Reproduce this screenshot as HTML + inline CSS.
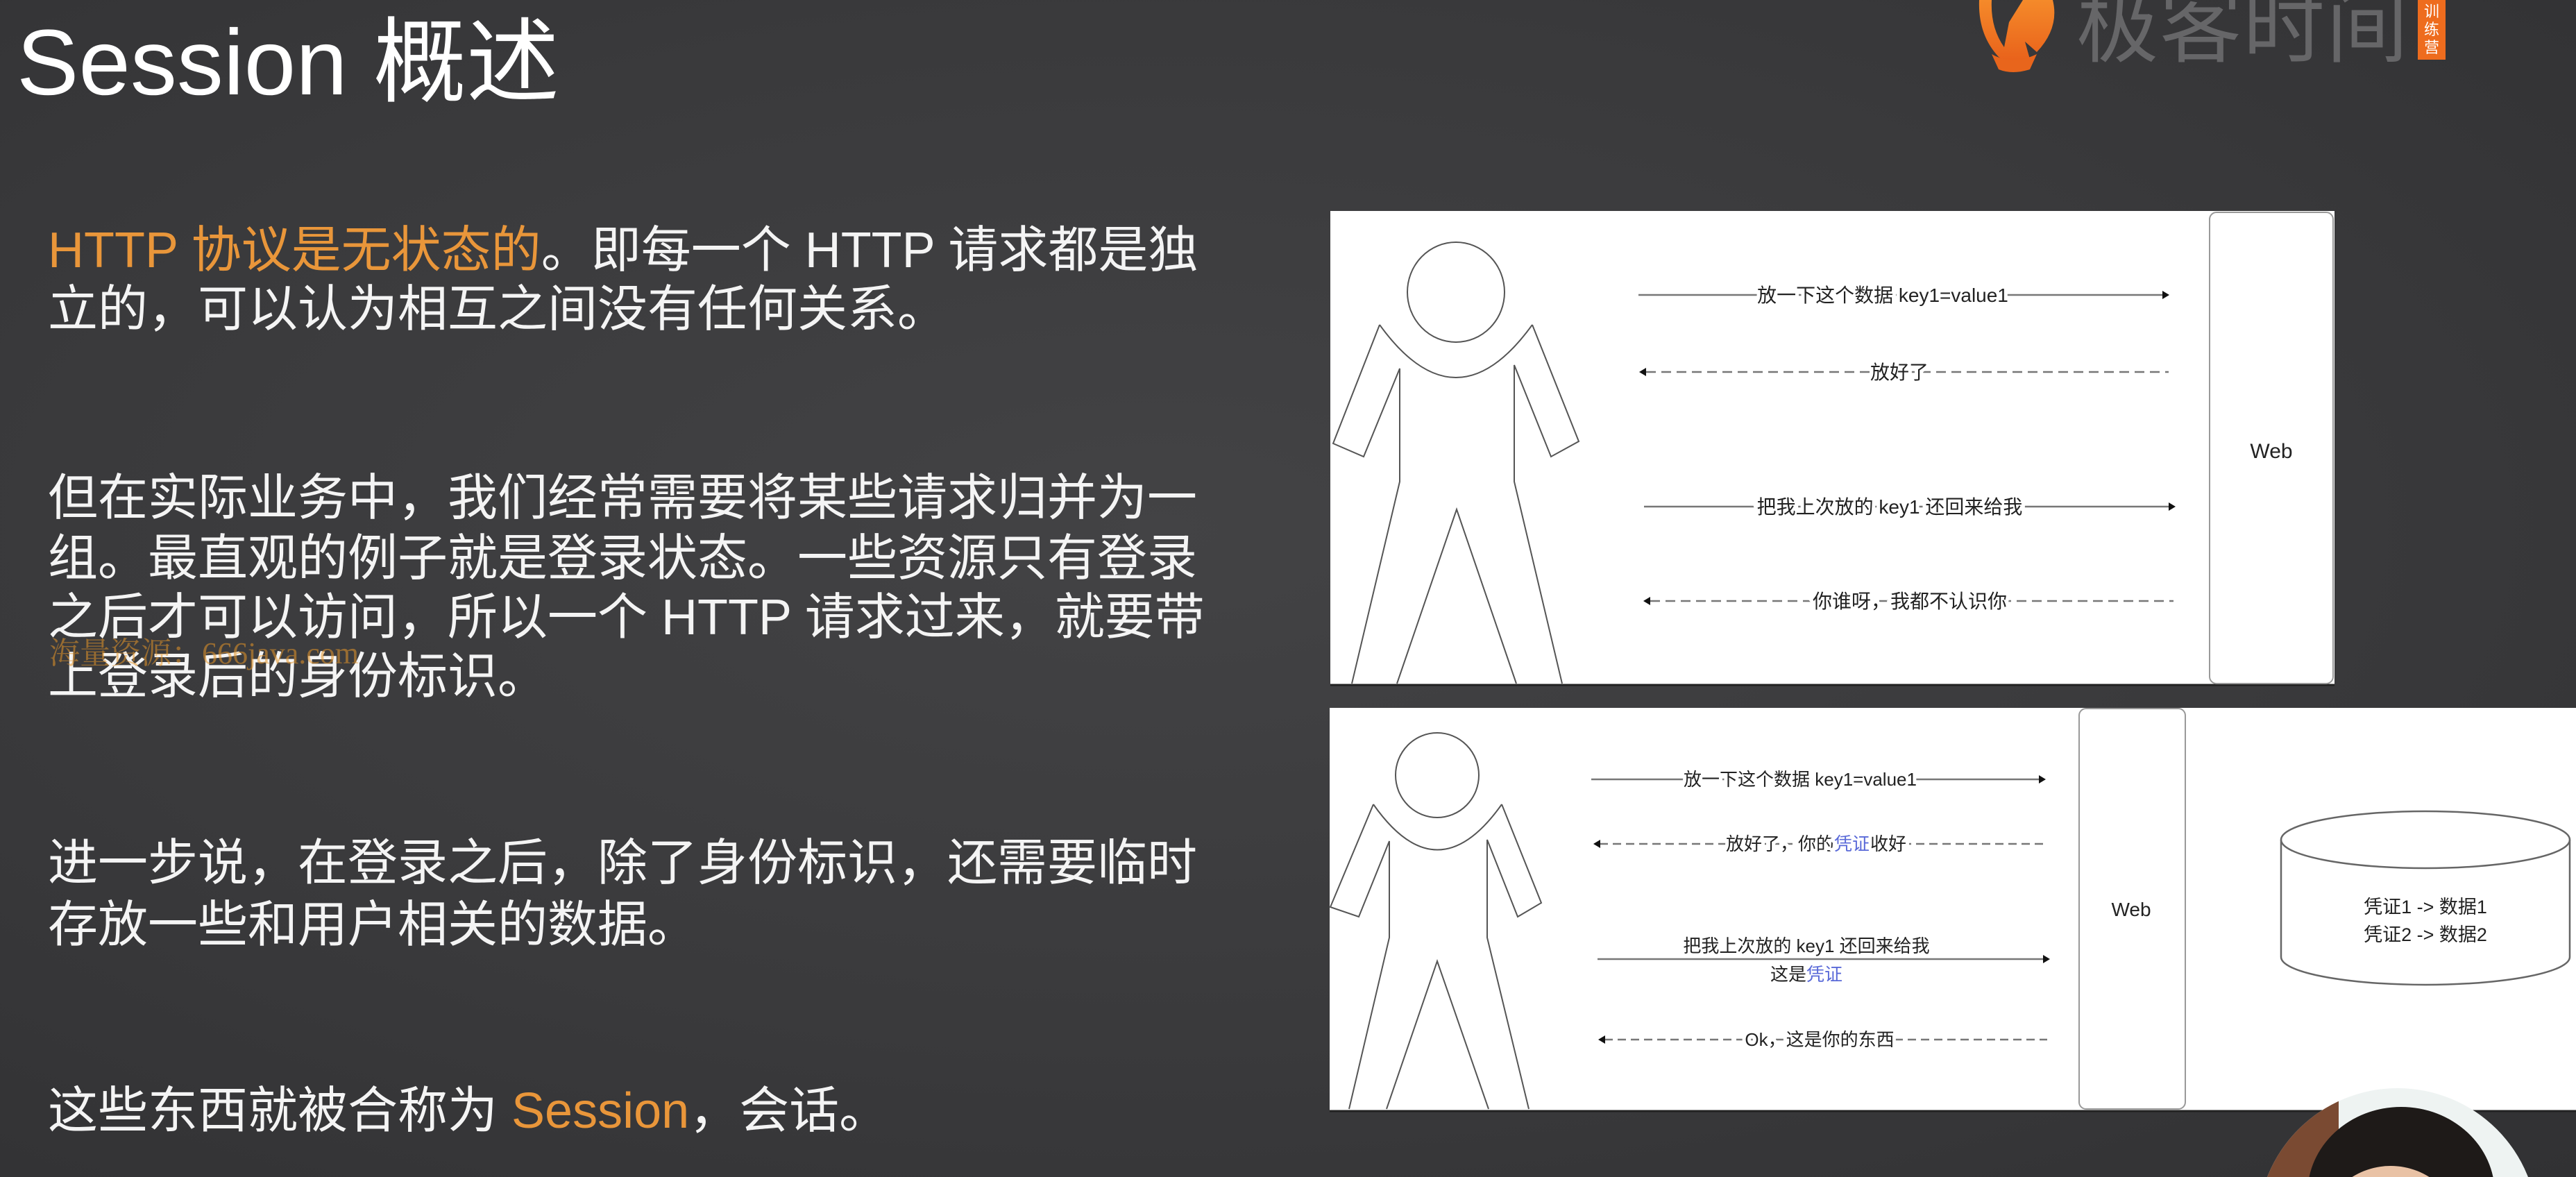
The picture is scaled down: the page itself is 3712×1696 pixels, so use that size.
<!DOCTYPE html>
<html><head><meta charset="utf-8"><style>
html,body{margin:0;padding:0;width:3712px;height:1696px;overflow:hidden}
body{position:relative;background:radial-gradient(ellipse at 45% 45%,#434345 0%,#3a3a3c 55%,#313133 100%);font-family:"Liberation Sans","Noto Sans CJK SC",sans-serif}
.t{position:absolute;left:69px;white-space:nowrap;color:#f4f4f4;font-size:72px;line-height:72px;font-family:"Liberation Sans","Noto Sans CJK SC",sans-serif}
.o{color:#e9963a}
</style></head><body>
<div style="position:absolute;left:24px;top:16px;font-size:134px;line-height:150px;color:#fff;white-space:nowrap">Session 概述</div>

<div class="t" style="top:325px"><span class="o">HTTP 协议是无状态的</span>。即每一个 HTTP 请求都是独</div>
<div class="t" style="top:410px">立的，可以认为相互之间没有任何关系。</div>
<div class="t" style="top:682px">但在实际业务中，我们经常需要将某些请求归并为一</div>
<div class="t" style="top:769px">组。最直观的例子就是登录状态。一些资源只有登录</div>
<div class="t" style="top:854px">之后才可以访问，所以一个 HTTP 请求过来，就要带</div>
<div class="t" style="top:939px">上登录后的身份标识。</div>
<div class="t" style="top:1208px">进一步说，在登录之后，除了身份标识，还需要临时</div>
<div class="t" style="top:1297px">存放一些和用户相关的数据。</div>
<div class="t" style="top:1565px">这些东西就被合称为 <span class="o">Session</span>，会话。</div>
<div style="position:absolute;left:71px;top:905px;font-size:44px;color:rgba(230,150,40,0.55);font-family:'Liberation Serif','Noto Serif CJK SC',serif;white-space:nowrap">海量资源：666java.com</div>

<svg style="position:absolute;left:0;top:0" width="3712" height="1696" viewBox="0 0 3712 1696">
<defs><linearGradient id="og" x1="0" y1="0" x2="0" y2="1"><stop offset="0" stop-color="#f58a2a"/><stop offset="1" stop-color="#e8601a"/></linearGradient>
<clipPath id="cam"><circle cx="3455" cy="1770" r="202"/></clipPath></defs>
<path d="M2852 0 L2870 0 Q2868 40 2888 68 L2895 32 L2915 0 L2958 0 Q2968 40 2935 75 L2918 60 L2925 85 Q2905 100 2880 82 Q2850 50 2852 0 Z" fill="url(#og)"/>
<path d="M2870 78 Q2900 95 2935 78 L2925 100 Q2900 108 2880 100 Z" fill="#e8651c"/>
<text x="2992" y="80" font-size="118" fill="#666668" font-family="Noto Sans CJK SC,sans-serif" textLength="478">极客时间</text>
<rect x="3484" y="0" width="40" height="86" fill="#ee6c1e"/>
<text x="3504" y="24" font-size="22" fill="#fff" text-anchor="middle" font-family="Noto Sans CJK SC,sans-serif">训</text>
<text x="3504" y="50" font-size="22" fill="#fff" text-anchor="middle" font-family="Noto Sans CJK SC,sans-serif">练</text>
<text x="3504" y="76" font-size="22" fill="#fff" text-anchor="middle" font-family="Noto Sans CJK SC,sans-serif">营</text>

<rect x="1917" y="304" width="1447" height="683" fill="#fff"/>
<line x1="1917" y1="987" x2="3364" y2="987" stroke="#222" stroke-width="3"/>
<rect x="3184" y="306" width="178" height="679" rx="10" fill="#fff" stroke="#999" stroke-width="2"/>
<text x="3273" y="660" font-size="30" text-anchor="middle" fill="#222" font-family="Liberation Sans,sans-serif">Web</text>
<g fill="none" stroke="#555" stroke-width="2">
<ellipse cx="2098" cy="421" rx="70" ry="72"/>
<path d="M1988 468 Q2098 620 2208 468"/>
<path d="M1988 468 L1921 639 L1965 658 L2017 531 L2017 694 L1948 985"/>
<path d="M2013 985 L2099 734 L2185 985"/>
<path d="M2251 985 L2182 694 L2182 526 L2235 658 L2275 636 L2208 468"/>
</g>
<g stroke="#777" stroke-width="2.5" fill="none">
<line x1="2361" y1="425" x2="3118" y2="425"/>
<line x1="2372" y1="536" x2="3125" y2="536" stroke-dasharray="14 8"/>
<line x1="2369" y1="730" x2="3127" y2="730"/>
<line x1="2378" y1="866" x2="3132" y2="866" stroke-dasharray="14 8"/>
</g>
<g fill="#111"><path d="M3126 425 l-10 -6 v12z"/><path d="M2362 536 l10 -6 v12z"/><path d="M3135 730 l-10 -6 v12z"/><path d="M2368 866 l10 -6 v12z"/></g>
<g font-size="28" text-anchor="middle" fill="#222" font-family="Liberation Sans,Noto Sans CJK SC,sans-serif" stroke="#fff" stroke-width="10" paint-order="stroke">
<text x="2713" y="435">放一下这个数据 key1=value1</text>
<text x="2737" y="546">放好了</text>
<text x="2723" y="740">把我上次放的 key1 还回来给我</text>
<text x="2752" y="876">你谁呀，我都不认识你</text>
</g>

<rect x="1916" y="1020" width="1796" height="581" fill="#fff"/>
<line x1="1916" y1="1601" x2="3712" y2="1601" stroke="#222" stroke-width="3"/>
<rect x="2996" y="1021" width="153" height="577" rx="10" fill="#fff" stroke="#999" stroke-width="2"/>
<text x="3071" y="1320" font-size="28" text-anchor="middle" fill="#222" font-family="Liberation Sans,sans-serif">Web</text>
<g fill="none" stroke="#666" stroke-width="2.5">
<path d="M3287 1210 V1379 A208 40 0 0 0 3703 1379 V1210"/>
<ellipse cx="3495" cy="1210" rx="208" ry="41"/>
</g>
<g font-size="27" text-anchor="middle" fill="#222" font-family="Liberation Sans,Noto Sans CJK SC,sans-serif">
<text x="3495" y="1316">凭证1 -&gt; 数据1</text>
<text x="3495" y="1356">凭证2 -&gt; 数据2</text>
</g>
<g fill="none" stroke="#555" stroke-width="2">
<ellipse cx="2071" cy="1117" rx="60" ry="61"/>
<path d="M1979 1159 Q2071 1290 2164 1159"/>
<path d="M1979 1159 L1917 1307 L1958 1321 L2002 1212 L2002 1351 L1944 1598"/>
<path d="M1998 1598 L2071 1385 L2145 1598"/>
<path d="M2203 1598 L2143 1351 L2143 1210 L2187 1321 L2221 1301 L2164 1159"/>
</g>
<g stroke="#777" stroke-width="2.5" fill="none">
<line x1="2293" y1="1123" x2="2940" y2="1123"/>
<line x1="2305" y1="1216" x2="2946" y2="1216" stroke-dasharray="12 7"/>
<line x1="2302" y1="1382" x2="2945" y2="1382"/>
<line x1="2312" y1="1498" x2="2950" y2="1498" stroke-dasharray="12 7"/>
</g>
<g fill="#111"><path d="M2948 1123 l-10 -6 v12z"/><path d="M2296 1216 l10 -6 v12z"/><path d="M2954 1382 l-10 -6 v12z"/><path d="M2303 1498 l10 -6 v12z"/></g>
<g font-size="26" text-anchor="middle" fill="#222" font-family="Liberation Sans,Noto Sans CJK SC,sans-serif" stroke="#fff" stroke-width="10" paint-order="stroke">
<text x="2594" y="1132">放一下这个数据 key1=value1</text>
<text x="2617" y="1225">放好了，你的<tspan fill="#5a6ad8">凭证</tspan>收好</text>
<text x="2603" y="1372" stroke-width="0">把我上次放的 key1 还回来给我</text>
<text x="2603" y="1413" stroke-width="0">这是<tspan fill="#5a6ad8">凭证</tspan></text>
<text x="2622" y="1507">Ok，这是你的东西</text>
</g>

<g clip-path="url(#cam)">
<rect x="3250" y="1560" width="420" height="220" fill="#eef3f2"/>
<rect x="3250" y="1560" width="120" height="220" fill="#7a4a32"/>
<ellipse cx="3460" cy="1720" rx="135" ry="125" fill="#1e1a18"/>
<ellipse cx="3445" cy="1775" rx="100" ry="95" fill="#e9c2a5"/>
</g>
</svg>
</body></html>
